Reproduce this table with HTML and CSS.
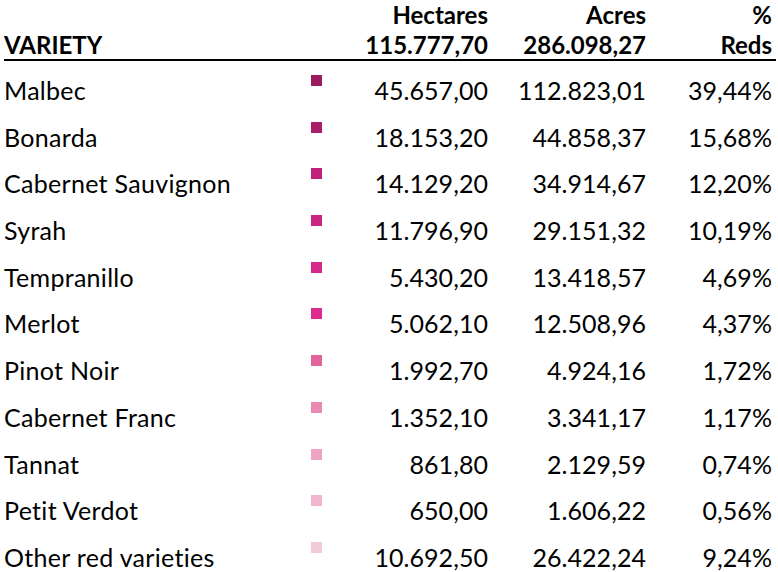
FILE: index.html
```html
<!DOCTYPE html>
<html>
<head>
<meta charset="utf-8">
<link rel="stylesheet" href="styles.css">
</head>
<body>
<div class="table">
  <div class="head">
    <div class="c-name"><span class="l2">VARIETY</span></div>
    <div class="c-sq"></div>
    <div class="c-num"><span>Hectares</span><span>115.777,70</span></div>
    <div class="c-num"><span>Acres</span><span>286.098,27</span></div>
    <div class="c-pct"><span>%</span><span>Reds</span></div>
  </div>
  <div class="row"><div class="c-name">Malbec</div><div class="c-sq"><i class="sq s1"></i></div><div class="c-num">45.657,00</div><div class="c-num">112.823,01</div><div class="c-pct">39,44%</div></div>
  <div class="row"><div class="c-name">Bonarda</div><div class="c-sq"><i class="sq s2"></i></div><div class="c-num">18.153,20</div><div class="c-num">44.858,37</div><div class="c-pct">15,68%</div></div>
  <div class="row"><div class="c-name">Cabernet Sauvignon</div><div class="c-sq"><i class="sq s3"></i></div><div class="c-num">14.129,20</div><div class="c-num">34.914,67</div><div class="c-pct">12,20%</div></div>
  <div class="row"><div class="c-name">Syrah</div><div class="c-sq"><i class="sq s4"></i></div><div class="c-num">11.796,90</div><div class="c-num">29.151,32</div><div class="c-pct">10,19%</div></div>
  <div class="row"><div class="c-name">Tempranillo</div><div class="c-sq"><i class="sq s5"></i></div><div class="c-num">5.430,20</div><div class="c-num">13.418,57</div><div class="c-pct">4,69%</div></div>
  <div class="row"><div class="c-name">Merlot</div><div class="c-sq"><i class="sq s6"></i></div><div class="c-num">5.062,10</div><div class="c-num">12.508,96</div><div class="c-pct">4,37%</div></div>
  <div class="row"><div class="c-name">Pinot Noir</div><div class="c-sq"><i class="sq s7"></i></div><div class="c-num">1.992,70</div><div class="c-num">4.924,16</div><div class="c-pct">1,72%</div></div>
  <div class="row"><div class="c-name">Cabernet Franc</div><div class="c-sq"><i class="sq s8"></i></div><div class="c-num">1.352,10</div><div class="c-num">3.341,17</div><div class="c-pct">1,17%</div></div>
  <div class="row"><div class="c-name">Tannat</div><div class="c-sq"><i class="sq s9"></i></div><div class="c-num">861,80</div><div class="c-num">2.129,59</div><div class="c-pct">0,74%</div></div>
  <div class="row"><div class="c-name">Petit Verdot</div><div class="c-sq"><i class="sq s10"></i></div><div class="c-num">650,00</div><div class="c-num">1.606,22</div><div class="c-pct">0,56%</div></div>
  <div class="row"><div class="c-name">Other red varieties</div><div class="c-sq"><i class="sq s11"></i></div><div class="c-num">10.692,50</div><div class="c-num">26.422,24</div><div class="c-pct">9,24%</div></div>
</div>
</body>
</html>
```
FILE: styles.css
```css
html, body {
  margin: 0;
  padding: 0;
  background: #ffffff;
  overflow: hidden;
}
body {
  font-family: "Lato", "Open Sans", sans-serif;
  color: #000000;
  font-size: 25px;
}
.table {
  width: 772px;
  margin-left: 4px;
}
.head, .row {
  display: grid;
  grid-template-columns: 300px 30px 154px 158px 126px;
}
.head {
  height: 59px;
  border-bottom: 2px solid #000;
  font-weight: 700;
  font-size: 24px;
  line-height: 29.5px;
  box-sizing: content-box;
}
.head .c-name {
  display: flex;
  align-items: flex-end;
}
.head .c-num, .head .c-pct {
  display: flex;
  flex-direction: column;
  align-items: flex-end;
  justify-content: flex-end;
}
.row {
  height: 46.7px;
  line-height: 26px;
  letter-spacing: 0.3px;
  box-sizing: border-box;
}
.row > div {
  padding-top: 16px;
}
.row .c-num, .row .c-pct {
  letter-spacing: 0.05px;
}
.c-num, .c-pct {
  text-align: right;
}
.c-num, .c-pct, .c-name {
  white-space: nowrap;
}
.row .c-sq {
  padding-top: 14px;
}
.sq {
  display: block;
  width: 11px;
  height: 11px;
  margin-left: 7px;
}
.s1 { background: #9b1b5e; }
.s2 { background: #ab1c69; }
.s3 { background: #bf2079; }
.s4 { background: #cb2583; }
.s5 { background: #d4288a; }
.s6 { background: #dd2b8e; }
.s7 { background: #e3649c; }
.s8 { background: #e88ab2; }
.s9 { background: #eda3c2; }
.s10 { background: #f0b6ce; }
.s11 { background: #f3cad9; }
```
